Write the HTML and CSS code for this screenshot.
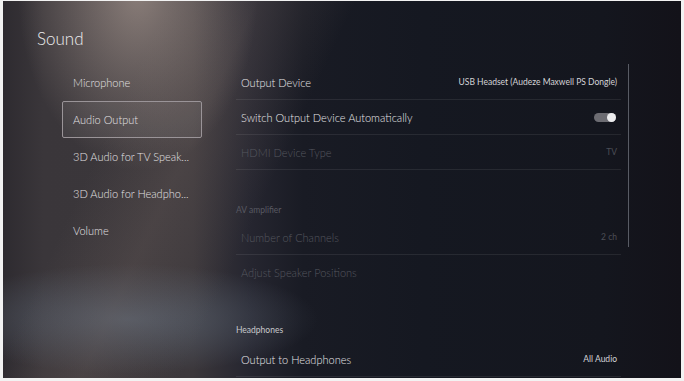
FILE: index.html
```html
<!DOCTYPE html>
<html lang="en">
<head>
    <meta charset="UTF-8">
    <meta name="viewport" content="width=device-width, initial-scale=1.0">
    <title>Sound Settings</title>
    <link rel="stylesheet" href="styles.css">
</head>
<body>

<div id="screen">
    <!-- Page title -->
    <h1 class="title">Sound</h1>

    <div class="main">
        <!-- Left menu -->
        <ul class="nav">
            <li class="nav-item">Microphone</li>
            <li class="nav-item selected">Audio Output</li>
            <li class="nav-item">3D Audio for TV Speak...</li>
            <li class="nav-item">3D Audio for Headpho...</li>
            <li class="nav-item">Volume</li>
        </ul>

        <!-- Settings list -->
        <div class="panel">
            <div class="list">
                <div class="row">
                    <span class="label">Output Device</span>
                    <span class="value small">USB Headset (Audeze Maxwell PS Dongle)</span>
                </div>
                <div class="row">
                    <span class="label">Switch Output Device Automatically</span>
                    <span class="toggle on"><span class="knob"></span></span>
                </div>
                <div class="row disabled">
                    <span class="label">HDMI Device Type</span>
                    <span class="value small">TV</span>
                </div>

                <div class="section dim">AV amplifier</div>
                <div class="row disabled">
                    <span class="label">Number of Channels</span>
                    <span class="value small">2 ch</span>
                </div>
                <div class="row disabled no-line">
                    <span class="label">Adjust Speaker Positions</span>
                </div>

                <div class="section second">Headphones</div>
                <div class="row">
                    <span class="label">Output to Headphones</span>
                    <span class="value small">All Audio</span>
                </div>
            </div>

            <div class="scroll">
                <div class="thumb"></div>
            </div>
        </div>
    </div>
</div>

</body>
</html>
```

FILE: styles.css
```css
body {
    margin: 0;
    padding: 0;
    background-color: #f2f2f2;
    font-family: Lato, "Open Sans", sans-serif;
    font-weight: 300;
    color: #e4e4e6;
}
#screen {
    width: 678px;
    height: 377px;
    margin: 1px 3px 3px 3px;
    display: flex;
    flex-direction: column;
    overflow: hidden;
    background:
        radial-gradient(ellipse 120px 180px at 135px -10px, rgba(190, 172, 162, 0.6), rgba(190, 172, 162, 0) 100%),
        linear-gradient(115deg, rgba(0, 0, 0, 0) 150px, rgba(120, 105, 100, 0.25) 230px, rgba(0, 0, 0, 0) 320px),
        radial-gradient(ellipse 190px 55px at 125px 318px, rgba(92, 102, 116, 0.75), rgba(92, 102, 116, 0) 100%),
        linear-gradient(to right, #2e2b30 0, #3a363a 40px, #3b373b 190px, #262630 245px, #191b24 300px, #151821 420px, #14161e 600px, #131219 678px);
}
.title {
    margin: 0;
    height: 63px;
    box-sizing: border-box;
    padding: 28px 0 0 34px;
    font-size: 17px;
    font-weight: 300;
    line-height: 20px;
    color: #ececee;
}
.main {
    display: flex;
    flex: 1;
}
.nav {
    list-style: none;
    margin: 0;
    padding: 0 0 0 59px;
    width: 140px;
}
.nav-item {
    height: 37px;
    box-sizing: border-box;
    padding-left: 10px;
    display: flex;
    align-items: center;
    font-size: 11px;
    color: #e2e0e2;
    border: 1px solid transparent;
    border-radius: 2px;
    white-space: nowrap;
}
.nav-item.selected {
    border-color: #9a9498;
    background-color: rgba(255, 255, 255, 0.05);
}
.panel {
    display: flex;
    margin-left: 34px;
}
.list {
    width: 385px;
    padding-top: 1px;
}
.row {
    height: 35px;
    box-sizing: border-box;
    display: flex;
    align-items: center;
    justify-content: space-between;
    padding: 0 4px 0 5px;
    border-bottom: 1px solid rgba(255, 255, 255, 0.08);
}
.row.no-line {
    border-bottom-color: transparent;
}
.label {
    font-size: 11px;
    color: #e6e6e8;
}
.value.small {
    font-size: 8.5px;
    font-weight: 400;
    color: #d4d4d8;
}
.row.disabled .label {
    color: #55575f;
}
.row.disabled .value.small {
    color: #4c4e56;
}
.section {
    height: 50px;
    box-sizing: border-box;
    padding-top: 33px;
    font-size: 8.5px;
    font-weight: 400;
    line-height: 14px;
    color: #c8c8cc;
}
.section.dim {
    color: #585962;
}
.section.second {
    height: 52px;
}
.toggle {
    width: 22px;
    height: 9px;
    border-radius: 5px;
    background-color: #6c6c72;
    display: flex;
    align-items: center;
    justify-content: flex-end;
    margin-right: 1px;
}
.knob {
    width: 9px;
    height: 9px;
    border-radius: 50%;
    background-color: #ececee;
}
.scroll {
    margin-left: 7px;
    width: 1px;
}
.thumb {
    width: 1px;
    height: 183px;
    background-color: #585b64;
}
```
